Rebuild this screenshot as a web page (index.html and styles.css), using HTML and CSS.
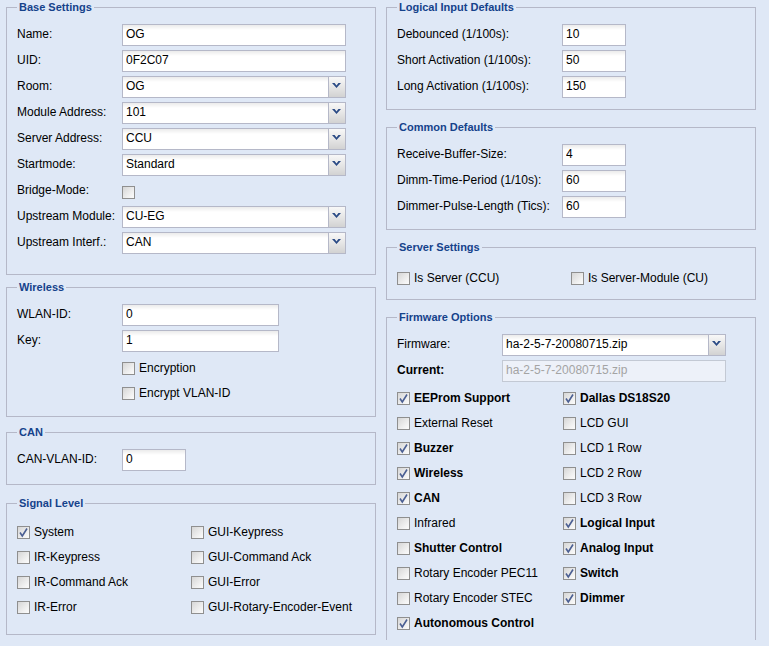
FILE: index.html
```html
<!DOCTYPE html>
<html>
<head>
<meta charset="utf-8">
<link rel="stylesheet" href="styles.css">
</head>
<body>
<div class="page">
  <div class="col">
    <fieldset class="fs fs-base">
      <legend>Base Settings</legend>
      <div class="row"><span class="lbl">Name:</span><input class="txt w224" value="OG"></div>
      <div class="row"><span class="lbl">UID:</span><input class="txt w224" value="0F2C07"></div>
      <div class="row"><span class="lbl">Room:</span><div class="combo w224"><span class="val">OG</span><span class="trig"><svg width="9" height="5" viewBox="0 0 9 5"><polygon points="0,0 2.6,0 4.5,2.4 6.4,0 9,0 4.5,5" fill="#2a4a85"/></svg></span></div></div>
      <div class="row"><span class="lbl">Module Address:</span><div class="combo w224"><span class="val">101</span><span class="trig"><svg width="9" height="5" viewBox="0 0 9 5"><polygon points="0,0 2.6,0 4.5,2.4 6.4,0 9,0 4.5,5" fill="#2a4a85"/></svg></span></div></div>
      <div class="row"><span class="lbl">Server Address:</span><div class="combo w224"><span class="val">CCU</span><span class="trig"><svg width="9" height="5" viewBox="0 0 9 5"><polygon points="0,0 2.6,0 4.5,2.4 6.4,0 9,0 4.5,5" fill="#2a4a85"/></svg></span></div></div>
      <div class="row"><span class="lbl">Startmode:</span><div class="combo w224"><span class="val">Standard</span><span class="trig"><svg width="9" height="5" viewBox="0 0 9 5"><polygon points="0,0 2.6,0 4.5,2.4 6.4,0 9,0 4.5,5" fill="#2a4a85"/></svg></span></div></div>
      <div class="row"><span class="lbl">Bridge-Mode:</span><span class="cb cb-inrow"></span></div>
      <div class="row"><span class="lbl">Upstream Module:</span><div class="combo w224"><span class="val">CU-EG</span><span class="trig"><svg width="9" height="5" viewBox="0 0 9 5"><polygon points="0,0 2.6,0 4.5,2.4 6.4,0 9,0 4.5,5" fill="#2a4a85"/></svg></span></div></div>
      <div class="row"><span class="lbl">Upstream Interf.:</span><div class="combo w224"><span class="val">CAN</span><span class="trig"><svg width="9" height="5" viewBox="0 0 9 5"><polygon points="0,0 2.6,0 4.5,2.4 6.4,0 9,0 4.5,5" fill="#2a4a85"/></svg></span></div></div>
    </fieldset>

    <fieldset class="fs fs-wireless">
      <legend>Wireless</legend>
      <div class="row"><span class="lbl">WLAN-ID:</span><input class="txt w157" value="0"></div>
      <div class="row"><span class="lbl">Key:</span><input class="txt w157" value="1"></div>
      <div class="cbrow indent"><span class="cb"></span><span class="t">Encryption</span></div>
      <div class="cbrow indent"><span class="cb"></span><span class="t">Encrypt VLAN-ID</span></div>
    </fieldset>

    <fieldset class="fs fs-can">
      <legend>CAN</legend>
      <div class="row"><span class="lbl">CAN-VLAN-ID:</span><input class="txt w64" value="0"></div>
    </fieldset>

    <fieldset class="fs fs-signal">
      <legend>Signal Level</legend>
      <div class="grid2 g174">
        <div class="cbrow"><span class="cb on"><svg viewBox="0 0 11 11"><polyline points="2,5.5 4.3,9 9,1.5" fill="none" stroke="#4b5f93" stroke-width="1.6"/></svg></span><span class="t">System</span></div>
        <div class="cbrow"><span class="cb"></span><span class="t">GUI-Keypress</span></div>
        <div class="cbrow"><span class="cb"></span><span class="t">IR-Keypress</span></div>
        <div class="cbrow"><span class="cb"></span><span class="t">GUI-Command Ack</span></div>
        <div class="cbrow"><span class="cb"></span><span class="t">IR-Command Ack</span></div>
        <div class="cbrow"><span class="cb"></span><span class="t">GUI-Error</span></div>
        <div class="cbrow"><span class="cb"></span><span class="t">IR-Error</span></div>
        <div class="cbrow"><span class="cb"></span><span class="t">GUI-Rotary-Encoder-Event</span></div>
      </div>
    </fieldset>
  </div>

  <div class="col">
    <fieldset class="fs fs-num">
      <legend>Logical Input Defaults</legend>
      <div class="row"><span class="lbl wide">Debounced (1/100s):</span><input class="txt w64" value="10"></div>
      <div class="row"><span class="lbl wide">Short Activation (1/100s):</span><input class="txt w64" value="50"></div>
      <div class="row"><span class="lbl wide">Long Activation (1/100s):</span><input class="txt w64" value="150"></div>
    </fieldset>

    <fieldset class="fs fs-num">
      <legend>Common Defaults</legend>
      <div class="row"><span class="lbl wide">Receive-Buffer-Size:</span><input class="txt w64" value="4"></div>
      <div class="row"><span class="lbl wide">Dimm-Time-Period (1/10s):</span><input class="txt w64" value="60"></div>
      <div class="row"><span class="lbl wide">Dimmer-Pulse-Length (Tics):</span><input class="txt w64" value="60"></div>
    </fieldset>

    <fieldset class="fs fs-server">
      <legend>Server Settings</legend>
      <div class="grid2 g174">
        <div class="cbrow"><span class="cb"></span><span class="t">Is Server (CCU)</span></div>
        <div class="cbrow"><span class="cb"></span><span class="t">Is Server-Module (CU)</span></div>
      </div>
    </fieldset>

    <fieldset class="fs fs-fw">
      <legend>Firmware Options</legend>
      <div class="row"><span class="lbl">Firmware:</span><div class="combo w224"><span class="val">ha-2-5-7-20080715.zip</span><span class="trig"><svg width="9" height="5" viewBox="0 0 9 5"><polygon points="0,0 2.6,0 4.5,2.4 6.4,0 9,0 4.5,5" fill="#2a4a85"/></svg></span></div></div>
      <div class="row"><span class="lbl b">Current:</span><input class="txt w224 dis" value="ha-2-5-7-20080715.zip" disabled></div>
      <div class="cols">
        <div class="c166">
          <div class="cbrow"><span class="cb on"><svg viewBox="0 0 11 11"><polyline points="2,5.5 4.3,9 9,1.5" fill="none" stroke="#4b5f93" stroke-width="1.6"/></svg></span><span class="t b">EEProm Support</span></div>
          <div class="cbrow"><span class="cb"></span><span class="t">External Reset</span></div>
          <div class="cbrow"><span class="cb on"><svg viewBox="0 0 11 11"><polyline points="2,5.5 4.3,9 9,1.5" fill="none" stroke="#4b5f93" stroke-width="1.6"/></svg></span><span class="t b">Buzzer</span></div>
          <div class="cbrow"><span class="cb on"><svg viewBox="0 0 11 11"><polyline points="2,5.5 4.3,9 9,1.5" fill="none" stroke="#4b5f93" stroke-width="1.6"/></svg></span><span class="t b">Wireless</span></div>
          <div class="cbrow"><span class="cb on"><svg viewBox="0 0 11 11"><polyline points="2,5.5 4.3,9 9,1.5" fill="none" stroke="#4b5f93" stroke-width="1.6"/></svg></span><span class="t b">CAN</span></div>
          <div class="cbrow"><span class="cb"></span><span class="t">Infrared</span></div>
          <div class="cbrow"><span class="cb"></span><span class="t b">Shutter Control</span></div>
          <div class="cbrow"><span class="cb"></span><span class="t">Rotary Encoder PEC11</span></div>
          <div class="cbrow"><span class="cb"></span><span class="t">Rotary Encoder STEC</span></div>
          <div class="cbrow"><span class="cb on"><svg viewBox="0 0 11 11"><polyline points="2,5.5 4.3,9 9,1.5" fill="none" stroke="#4b5f93" stroke-width="1.6"/></svg></span><span class="t b">Autonomous Control</span></div>
        </div>
        <div class="c166">
          <div class="cbrow"><span class="cb on"><svg viewBox="0 0 11 11"><polyline points="2,5.5 4.3,9 9,1.5" fill="none" stroke="#4b5f93" stroke-width="1.6"/></svg></span><span class="t b">Dallas DS18S20</span></div>
          <div class="cbrow"><span class="cb"></span><span class="t">LCD GUI</span></div>
          <div class="cbrow"><span class="cb"></span><span class="t">LCD 1 Row</span></div>
          <div class="cbrow"><span class="cb"></span><span class="t">LCD 2 Row</span></div>
          <div class="cbrow"><span class="cb"></span><span class="t">LCD 3 Row</span></div>
          <div class="cbrow"><span class="cb on"><svg viewBox="0 0 11 11"><polyline points="2,5.5 4.3,9 9,1.5" fill="none" stroke="#4b5f93" stroke-width="1.6"/></svg></span><span class="t b">Logical Input</span></div>
          <div class="cbrow"><span class="cb on"><svg viewBox="0 0 11 11"><polyline points="2,5.5 4.3,9 9,1.5" fill="none" stroke="#4b5f93" stroke-width="1.6"/></svg></span><span class="t b">Analog Input</span></div>
          <div class="cbrow"><span class="cb on"><svg viewBox="0 0 11 11"><polyline points="2,5.5 4.3,9 9,1.5" fill="none" stroke="#4b5f93" stroke-width="1.6"/></svg></span><span class="t b">Switch</span></div>
          <div class="cbrow"><span class="cb on"><svg viewBox="0 0 11 11"><polyline points="2,5.5 4.3,9 9,1.5" fill="none" stroke="#4b5f93" stroke-width="1.6"/></svg></span><span class="t b">Dimmer</span></div>
        </div>
      </div>
    </fieldset>
  </div>
</div>
</body>
</html>
```

FILE: styles.css
```css
* { box-sizing: border-box; }

body {
  margin: 0;
  background: #dfe8f6;
  font: 12px "Liberation Sans", Arial, sans-serif;
  color: #000;
}

.page {
  display: flex;
  gap: 10px;
  padding-left: 6px;
  height: 640px;
  overflow: hidden;
}

.col {
  width: 370px;
  flex: none;
}

.fs {
  margin: 0 0 10px;
  padding: 10px 10px 7px;
  border: 1px solid #b5b8c8;
  min-width: 0;
}

.fs legend {
  padding: 0 2px;
  font: bold 11px/14px "Liberation Sans", Arial, sans-serif;
  color: #15428b;
}

.fs-base { padding-bottom: 16px; margin-bottom: 5px; }
.fs-wireless { padding-bottom: 10px; margin-bottom: 8px; }
.fs-can { padding-bottom: 9px; margin-bottom: 11px; }
.fs-signal { padding-bottom: 14px; }
.fs-server { padding-top: 12px; padding-bottom: 8px; }
.fs-fw { padding-bottom: 10px; }

.row {
  display: flex;
  height: 22px;
  margin-bottom: 4px;
}

.lbl {
  width: 105px;
  flex: none;
  padding-top: 3px;
  line-height: 14px;
  white-space: nowrap;
}
.lbl.wide { width: 165px; }
.b { font-weight: bold; }

.txt {
  height: 22px;
  margin: 0;
  border: 1px solid #b5b8c8;
  border-radius: 0;
  background: linear-gradient(#ebebeb, #fff 5px, #fff);
  padding: 0 3px 2px;
  font: 12px "Liberation Sans", Arial, sans-serif;
  color: #000;
  outline: none;
}
.txt.dis {
  background: #edf1f9;
  border-color: #c3c9d4;
  color: #a4a4a4;
}

.w224 { width: 224px; }
.w157 { width: 157px; }
.w64 { width: 64px; }

.combo {
  display: flex;
  height: 22px;
  border: 1px solid #b5b8c8;
  background: linear-gradient(#ebebeb, #fff 5px, #fff);
}
.combo .val {
  flex: 1;
  padding: 2px 3px 0;
  line-height: 14px;
  white-space: nowrap;
  overflow: hidden;
}
.trig {
  width: 17px;
  flex: none;
  border-left: 1px solid #b5b8c8;
  background: linear-gradient(#f8f8f8, #e6e6e6 50%, #d2d2d2);
  display: flex;
  justify-content: center;
  padding: 6px 1px 0 0;
}
.trig svg { display: block; }

.cb {
  width: 13px;
  height: 13px;
  flex: none;
  border: 1px solid #8f8f8f;
  background: linear-gradient(135deg, #d6d6d6, #f2f2f2 70%, #fbfbfb);
  display: block;
}
.cb svg { display: block; width: 11px; height: 11px; }
.cb-inrow { margin-top: 6px; }

.cbrow {
  display: flex;
  align-items: flex-start;
  gap: 4px;
  height: 25px;
  padding-top: 6px;
  white-space: nowrap;
}
.cbrow .t { line-height: 13px; }
.cbrow.indent { padding-left: 105px; }

.grid2 { display: grid; }
.g174 { grid-template-columns: 174px 174px; }

.cols { display: flex; }
.c166 { width: 166px; flex: none; }
```
